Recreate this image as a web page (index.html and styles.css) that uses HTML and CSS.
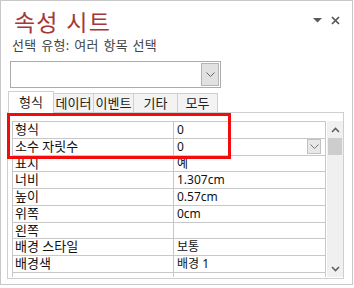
FILE: index.html
```html
<!DOCTYPE html>
<html lang="ko">
<head>
  <meta charset="UTF-8" />
  <title>속성 시트</title>
  <link rel="stylesheet" href="styles.css">
</head>
<body>

  <div class="sheet">
    <div class="head">
      <h1 class="title">속성 시트</h1>
      <div class="tools">
        <svg class="tool-menu" width="9" height="5" viewBox="0 0 9 5"><polygon points="0,0 9,0 4.5,4.5" fill="#5a5a5a"/></svg>
        <svg class="tool-close" width="9" height="9" viewBox="0 0 9 9"><path d="M1 1 L8 8 M8 1 L1 8" stroke="#555" stroke-width="1.7"/></svg>
      </div>
    </div>

    <div class="subtitle">선택 유형: 여러 항목 선택</div>

    <div class="combo">
      <span class="combo-btn">
        <svg width="9" height="5" viewBox="0 0 9 5"><polyline points="0.5,0.5 4.5,4.5 8.5,0.5" fill="none" stroke="#666" stroke-width="1"/></svg>
      </span>
    </div>

    <div class="tabs">
      <span class="tab active">형식</span>
      <span class="tab">데이터</span>
      <span class="tab">이벤트</span>
      <span class="tab wide">기타</span>
      <span class="tab">모두</span>
    </div>

    <div class="panel">
      <div class="grid">
        <div class="rows">
          <div class="row"><span class="key">형식</span><span class="val">0</span></div>
          <div class="row"><span class="key">소수 자릿수</span><span class="val">0
            <span class="cell-btn"><svg width="9" height="5" viewBox="0 0 9 5"><polyline points="0.5,0.5 4.5,4.5 8.5,0.5" fill="none" stroke="#777" stroke-width="1"/></svg></span>
          </span></div>
          <div class="row"><span class="key">표시</span><span class="val">예</span></div>
          <div class="row"><span class="key">너비</span><span class="val">1.307cm</span></div>
          <div class="row"><span class="key">높이</span><span class="val">0.57cm</span></div>
          <div class="row"><span class="key">위쪽</span><span class="val">0cm</span></div>
          <div class="row"><span class="key">왼쪽</span><span class="val"></span></div>
          <div class="row"><span class="key">배경 스타일</span><span class="val">보통</span></div>
          <div class="row"><span class="key">배경색</span><span class="val">배경 1</span></div>
          <div class="row"><span class="key"></span><span class="val"></span></div>
        </div>
        <div class="scrollbar">
          <svg class="arrow" width="9" height="6" viewBox="0 0 9 6"><polyline points="1,5 4.5,1.5 8,5" fill="none" stroke="#606060" stroke-width="1.6"/></svg>
          <div class="thumb"></div>
          <div class="track"></div>
          <svg class="arrow" width="9" height="6" viewBox="0 0 9 6"><polyline points="1,1 4.5,4.5 8,1" fill="none" stroke="#606060" stroke-width="1.6"/></svg>
        </div>
      </div>
    </div>

    <div class="highlight"></div>
  </div>

</body>
</html>
```

FILE: styles.css
```css
body {
  margin: 0;
  background: #fff;
  font-family: "Noto Sans", "Noto Sans CJK KR", sans-serif;
  color: #1e1e1e;
}

.sheet {
  position: relative;
  box-sizing: border-box;
  width: 353px;
  height: 285px;
  border: 1px solid #c8c8c8;
  background: #fff;
}

.head {
  display: flex;
  align-items: flex-start;
  justify-content: space-between;
  padding: 6px 12px 0 13px;
  height: 29px;
}

.title {
  margin: 0;
  font-size: 23px;
  font-weight: normal;
  line-height: 28px;
  color: #a4373a;
  font-family: "Noto Sans CJK KR", sans-serif;
  letter-spacing: 1.2px;
}

.tools {
  display: flex;
  align-items: center;
  gap: 9px;
  padding-top: 9px;
}

.subtitle {
  margin: 1px 0 0 11px;
  font-size: 13px;
  line-height: 17px;
  letter-spacing: 0.3px;
  word-spacing: 1px;
  color: #444;
}

.combo {
  position: relative;
  box-sizing: border-box;
  width: 211px;
  height: 27px;
  margin: 7px 0 0 9px;
  border: 1px solid #ababab;
  background: #fff;
  display: flex;
  justify-content: flex-end;
  padding: 1px;
}

.combo-btn {
  box-sizing: border-box;
  width: 18px;
  height: 23px;
  background: #e1e1e1;
  border: 1px solid #b4b4b4;
  display: flex;
  align-items: center;
  justify-content: center;
}

.tabs {
  display: flex;
  align-items: flex-end;
  margin: 3px 0 0 7px;
  height: 21px;
  position: relative;
  z-index: 1;
}

.tab {
  box-sizing: border-box;
  width: 40px;
  height: 19px;
  border: 1px solid #cfcfcf;
  border-left: none;
  border-bottom: none;
  background: #f3f3f3;
  font-size: 13px;
  line-height: 18px;
  text-align: center;
  color: #222;
}

.tab.wide {
  width: 44px;
}

.tab.active {
  width: 46px;
  height: 22px;
  margin-bottom: -1px;
  border-left: 1px solid #cfcfcf;
  background: #fff;
  line-height: 20px;
}

.panel {
  box-sizing: border-box;
  width: 337px;
  height: 167px;
  margin-left: 6px;
  border: 1px solid #cfcfcf;
  padding: 8px 0 0 4px;
}

.grid {
  display: flex;
  gap: 1px;
  height: 156px;
}

.rows {
  box-sizing: border-box;
  width: 314px;
  height: 156px;
  overflow: hidden;
  border: 1px solid #c8c8c8;
  border-bottom: none;
}

.row {
  display: flex;
  box-sizing: border-box;
  height: 16.75px;
  border-bottom: 1px solid #c8c8c8;
  font-size: 12px;
  line-height: 15px;
  color: #111;
}

.key {
  box-sizing: border-box;
  width: 161px;
  padding-left: 2px;
  border-right: 1px solid #c8c8c8;
  font-size: 13px;
}

.val {
  flex: 1;
  position: relative;
  padding-left: 3px;
}

.cell-btn {
  position: absolute;
  right: 4px;
  top: 0;
  box-sizing: border-box;
  width: 14px;
  height: 15px;
  background: #e8e8e8;
  border: 1px solid #c2c2c2;
  display: flex;
  align-items: center;
  justify-content: center;
}

.scrollbar {
  width: 16px;
  height: 156px;
  background: #f0f0f0;
  display: flex;
  flex-direction: column;
  align-items: center;
}

.scrollbar .arrow {
  margin: 6px 0 5px;
}

.thumb {
  width: 14px;
  height: 17px;
  background: #cdcdcd;
}

.track {
  flex: 1;
}

.highlight {
  position: absolute;
  left: 6px;
  top: 112px;
  box-sizing: border-box;
  width: 224px;
  height: 46px;
  border: 3px solid #f20d0d;
  z-index: 2;
}
```
